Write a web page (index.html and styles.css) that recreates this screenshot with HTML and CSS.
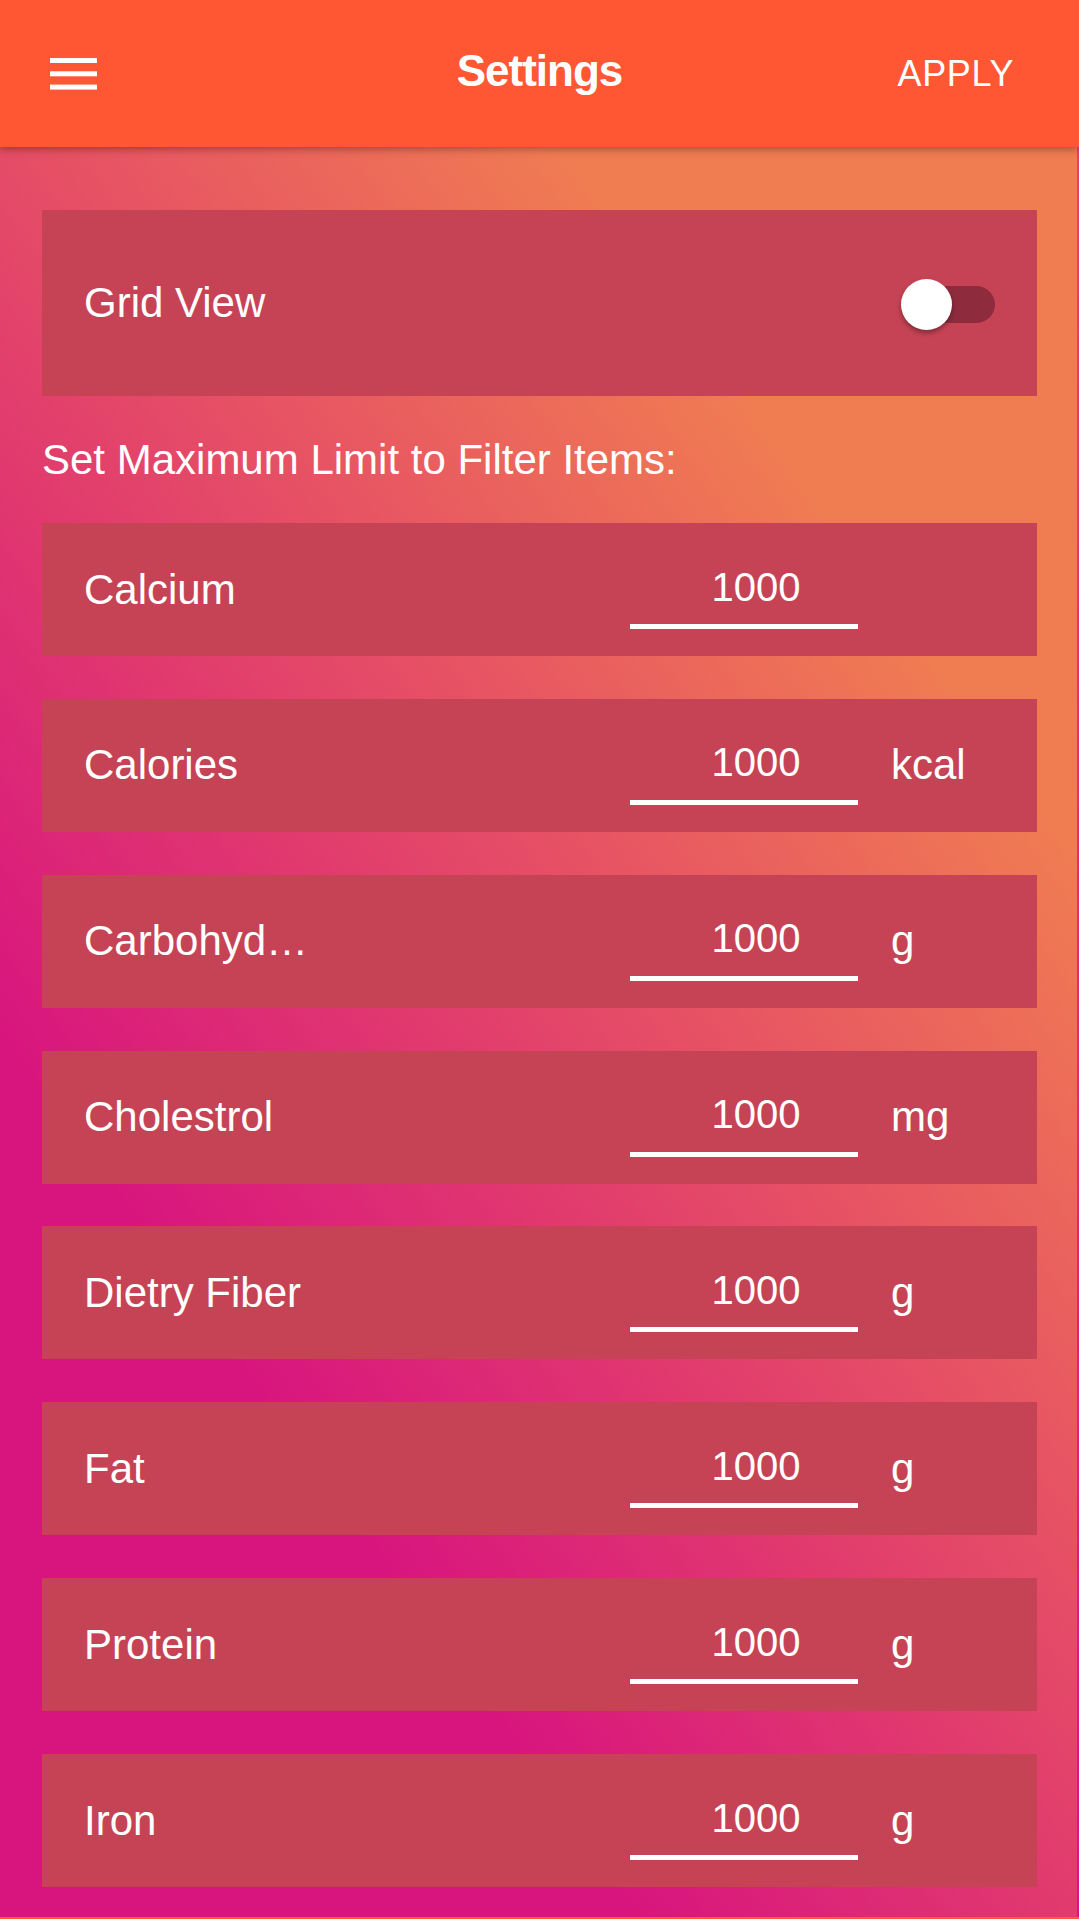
FILE: index.html
```html
<!DOCTYPE html>
<html lang="en">
<head>
<meta charset="utf-8">
<title>Settings</title>
<link rel="stylesheet" href="styles.css">
</head>
<body>
<header class="appbar">
  <div class="appbar-left">
    <svg class="menu-icon" width="47" height="32" viewBox="0 0 47 32" aria-hidden="true">
      <rect x="0" y="0" width="47" height="5" fill="#fff"/>
      <rect x="0" y="13.3" width="47" height="5" fill="#fff"/>
      <rect x="0" y="26.6" width="47" height="5" fill="#fff"/>
    </svg>
  </div>
  <h1 class="appbar-title">Settings</h1>
  <div class="appbar-right">
    <span class="apply">APPLY</span>
  </div>
</header>

<main class="content">
  <section class="card card-toggle">
    <span class="label-text">Grid View</span>
    <span class="switch">
      <span class="switch-track"></span>
      <span class="switch-thumb"></span>
    </span>
  </section>

  <p class="section-title">Set Maximum Limit to Filter Items:</p>

  <div class="limits">
    <div class="card row">
      <span class="row-label">Calcium</span>
      <input class="row-input" type="text" value="1000">
      <span class="row-unit"></span>
    </div>
    <div class="card row">
      <span class="row-label">Calories</span>
      <input class="row-input" type="text" value="1000">
      <span class="row-unit">kcal</span>
    </div>
    <div class="card row">
      <span class="row-label">Carbohydrates</span>
      <input class="row-input" type="text" value="1000">
      <span class="row-unit">g</span>
    </div>
    <div class="card row">
      <span class="row-label">Cholestrol</span>
      <input class="row-input" type="text" value="1000">
      <span class="row-unit">mg</span>
    </div>
    <div class="card row">
      <span class="row-label">Dietry Fiber</span>
      <input class="row-input" type="text" value="1000">
      <span class="row-unit">g</span>
    </div>
    <div class="card row">
      <span class="row-label">Fat</span>
      <input class="row-input" type="text" value="1000">
      <span class="row-unit">g</span>
    </div>
    <div class="card row">
      <span class="row-label">Protein</span>
      <input class="row-input" type="text" value="1000">
      <span class="row-unit">g</span>
    </div>
    <div class="card row">
      <span class="row-label">Iron</span>
      <input class="row-input" type="text" value="1000">
      <span class="row-unit">g</span>
    </div>
  </div>
</main>
</body>
</html>
```

FILE: styles.css
```css
* {
  box-sizing: border-box;
}

html, body {
  margin: 0;
  padding: 0;
}

body {
  background: #ff5733;
  font-family: "Liberation Sans", Arial, sans-serif;
  color: #fff;
  width: 1079px;
}

.appbar {
  position: relative;
  z-index: 2;
  height: 147px;
  background: #ff5733;
  display: grid;
  grid-template-columns: 1fr auto 1fr;
  align-items: center;
  padding: 0 50px;
  box-shadow: 0 2px 8px rgba(0, 0, 0, 0.35);
}

.appbar-left {
  display: flex;
  align-items: center;
}

.menu-icon {
  display: block;
}

.appbar-title {
  margin: 0 0 5px 0;
  font-size: 44px;
  font-weight: 700;
  letter-spacing: -1px;
  line-height: 1.15;
  color: #fff;
}

.appbar-right {
  display: flex;
  justify-content: flex-end;
  padding-right: 15px;
}

.apply {
  font-size: 36px;
  letter-spacing: 0.6px;
  line-height: 1.15;
  color: #fff;
}

.content {
  background:
    linear-gradient(#e2407a, #d8157e) right top / 2px 100% no-repeat,
    linear-gradient(54deg, #d8157e 27%, #f07c52 78%);
  padding: 63px 0 30px 0;
}

.card {
  background: #c64355;
  margin: 0 42px;
  padding: 0 42px;
  display: flex;
  align-items: center;
}

.card-toggle {
  height: 186px;
  justify-content: space-between;
}

.label-text {
  font-size: 42px;
  line-height: 46px;
}

.switch {
  position: relative;
  display: block;
  width: 87px;
  height: 37px;
  margin-top: 2px;
}

.switch-track {
  display: block;
  width: 87px;
  height: 37px;
  border-radius: 18.5px;
  background: #8e2c3e;
}

.switch-thumb {
  position: absolute;
  left: -7px;
  top: -7px;
  width: 51px;
  height: 51px;
  border-radius: 50%;
  background: #fff;
  box-shadow: 0 3px 5px rgba(0, 0, 0, 0.35);
}

.section-title {
  margin: 41px 42px 40px 42px;
  font-size: 42px;
  line-height: 46px;
}

.limits {
  display: flex;
  flex-direction: column;
  gap: 42.86px;
}

.row {
  height: 133px;
}

.row-label {
  flex: 0 1 230px;
  font-size: 42px;
  line-height: 46px;
  white-space: nowrap;
  overflow: hidden;
  text-overflow: ellipsis;
}

.row-input {
  margin-left: auto;
  flex: 0 0 228px;
  width: 228px;
  min-width: 0;
  height: 79px;
  padding: 0 0 0 24px;
  border: none;
  border-bottom: 5px solid #fff;
  border-radius: 0;
  background: transparent;
  color: #fff;
  font-family: "Liberation Sans", Arial, sans-serif;
  font-size: 40px;
  text-align: center;
  outline: none;
}

.row-unit {
  flex: 0 0 137px;
  min-width: 0;
  padding-left: 33px;
  font-size: 42px;
  line-height: 46px;
  white-space: nowrap;
}
```
